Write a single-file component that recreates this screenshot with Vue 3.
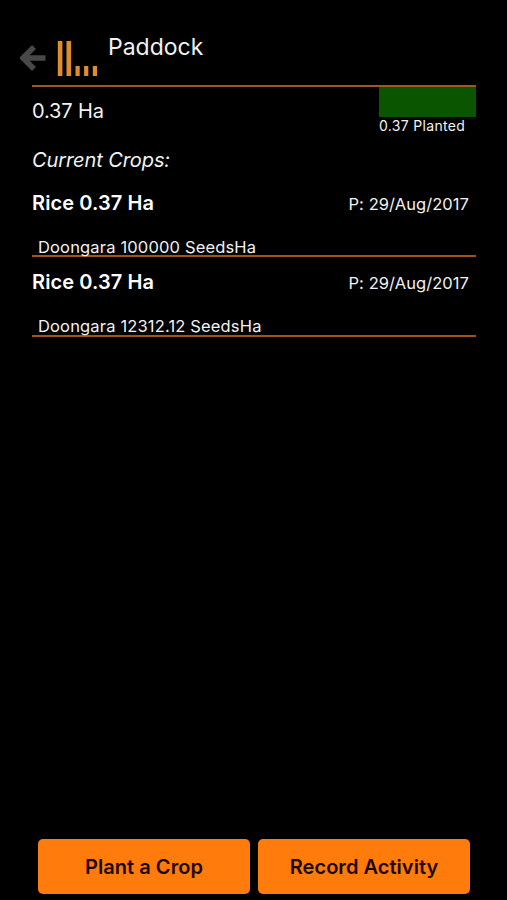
<template>
  <div class="page">
    <header class="header">
      <button class="back" aria-label="Back">
        <svg class="arrow" viewBox="0 0 26 26">
          <path d="M14 2 L3 13 L14 24 M4 13 H25.5" fill="none" stroke="#484848" stroke-width="5.6" />
        </svg>
      </button>
      <svg class="logo" viewBox="0 0 42 38">
        <g fill="#df8d2b">
          <rect x="0.8" y="1" width="4.6" height="35" />
          <rect x="9.5" y="1" width="4.6" height="35" />
          <rect x="18.5" y="26" width="4.2" height="10" />
          <rect x="27.1" y="26" width="4.2" height="10" />
          <rect x="35.8" y="26" width="4.2" height="10" />
        </g>
      </svg>
      <h1 class="title">Paddock</h1>
    </header>

    <main class="content">
      <div class="summary">
        <div class="area">{{ area }} Ha</div>
        <div class="planted">
          <div class="planted-bar"></div>
          <div class="planted-label">{{ area }} Planted</div>
        </div>
      </div>

      <div class="crops-title">Current Crops:</div>

      <div class="crop" v-for="crop in crops" :key="crop.id">
        <div class="crop-top">
          <span class="crop-name">{{ crop.name }} {{ crop.area }} Ha</span>
          <span class="crop-date">P: {{ crop.planted }}</span>
        </div>
        <div class="crop-detail">{{ crop.variety }} {{ crop.rate }} SeedsHa</div>
      </div>
    </main>

    <footer class="actions">
      <button class="action plant">Plant a Crop</button>
      <button class="action record">Record Activity</button>
    </footer>
  </div>
</template>

<script setup>
import { ref } from 'vue';

const area = ref('0.37');

const crops = ref([
  { id: 1, name: 'Rice', area: '0.37', planted: '29/Aug/2017', variety: 'Doongara', rate: '100000' },
  { id: 2, name: 'Rice', area: '0.37', planted: '29/Aug/2017', variety: 'Doongara', rate: '12312.12' }
]);
</script>

<style>
body {
  margin: 0;
  background: #000;
}
</style>

<style scoped>
.page {
  display: flex;
  flex-direction: column;
  box-sizing: border-box;
  height: 900px;
  width: 507px;
  background: #000;
  color: #f2f2f2;
  font-family: 'Inter', sans-serif;
}

.header {
  display: flex;
  align-items: flex-start;
  box-sizing: border-box;
  height: 85px;
  padding: 32px 0 0 20px;
}

.back {
  display: flex;
  background: none;
  border: none;
  padding: 0;
  margin-top: 13px;
  cursor: pointer;
}

.arrow {
  width: 26px;
  height: 26px;
}

.logo {
  width: 42px;
  height: 38px;
  margin: 8px 0 0 11px;
}

.title {
  margin: 0 0 0 9px;
  font-size: 23px;
  line-height: 30px;
  font-weight: 400;
}

.content {
  flex: 1;
  margin: 0 31px 0 32px;
}

.summary {
  display: flex;
  justify-content: space-between;
  border-top: 2px solid #a0591a;
  height: 56px;
}

.area {
  font-size: 20px;
  line-height: 48px;
  letter-spacing: -0.13px;
}

.planted {
  width: 97px;
}

.planted-bar {
  height: 30px;
  background: #0a5500;
}

.planted-label {
  font-size: 14px;
  line-height: 18px;
  letter-spacing: 0.33px;
  white-space: nowrap;
}

.crops-title {
  font-size: 20px;
  line-height: 34px;
  letter-spacing: -0.1px;
  font-style: italic;
}

.crop {
  box-sizing: border-box;
  height: 80px;
  border-bottom: 2px solid #a0561a;
}

.crop-top {
  display: flex;
  justify-content: space-between;
  padding: 10px 7px 0 0;
  line-height: 32px;
}

.crop + .crop .crop-top {
  padding-top: 9px;
}

.crop-name {
  font-size: 20px;
  font-weight: 600;
  letter-spacing: 0.1px;
  color: #fff;
}

.crop-date {
  font-size: 16.5px;
  letter-spacing: 0.07px;
  padding-top: 1px;
}

.crop-detail {
  padding: 17px 0 0 6px;
  font-size: 16.5px;
  line-height: 20px;
  letter-spacing: 0.16px;
}

.actions {
  display: flex;
  gap: 8px;
  padding: 0 37px 6px 38px;
}

.action {
  flex: 1;
  height: 55px;
  padding: 0;
  border: none;
  border-radius: 5px;
  background: #ff7b0c;
  color: #1a0800;
  font-family: inherit;
  font-size: 20px;
  font-weight: 600;
  letter-spacing: 0.04px;
  cursor: pointer;
}
</style>
